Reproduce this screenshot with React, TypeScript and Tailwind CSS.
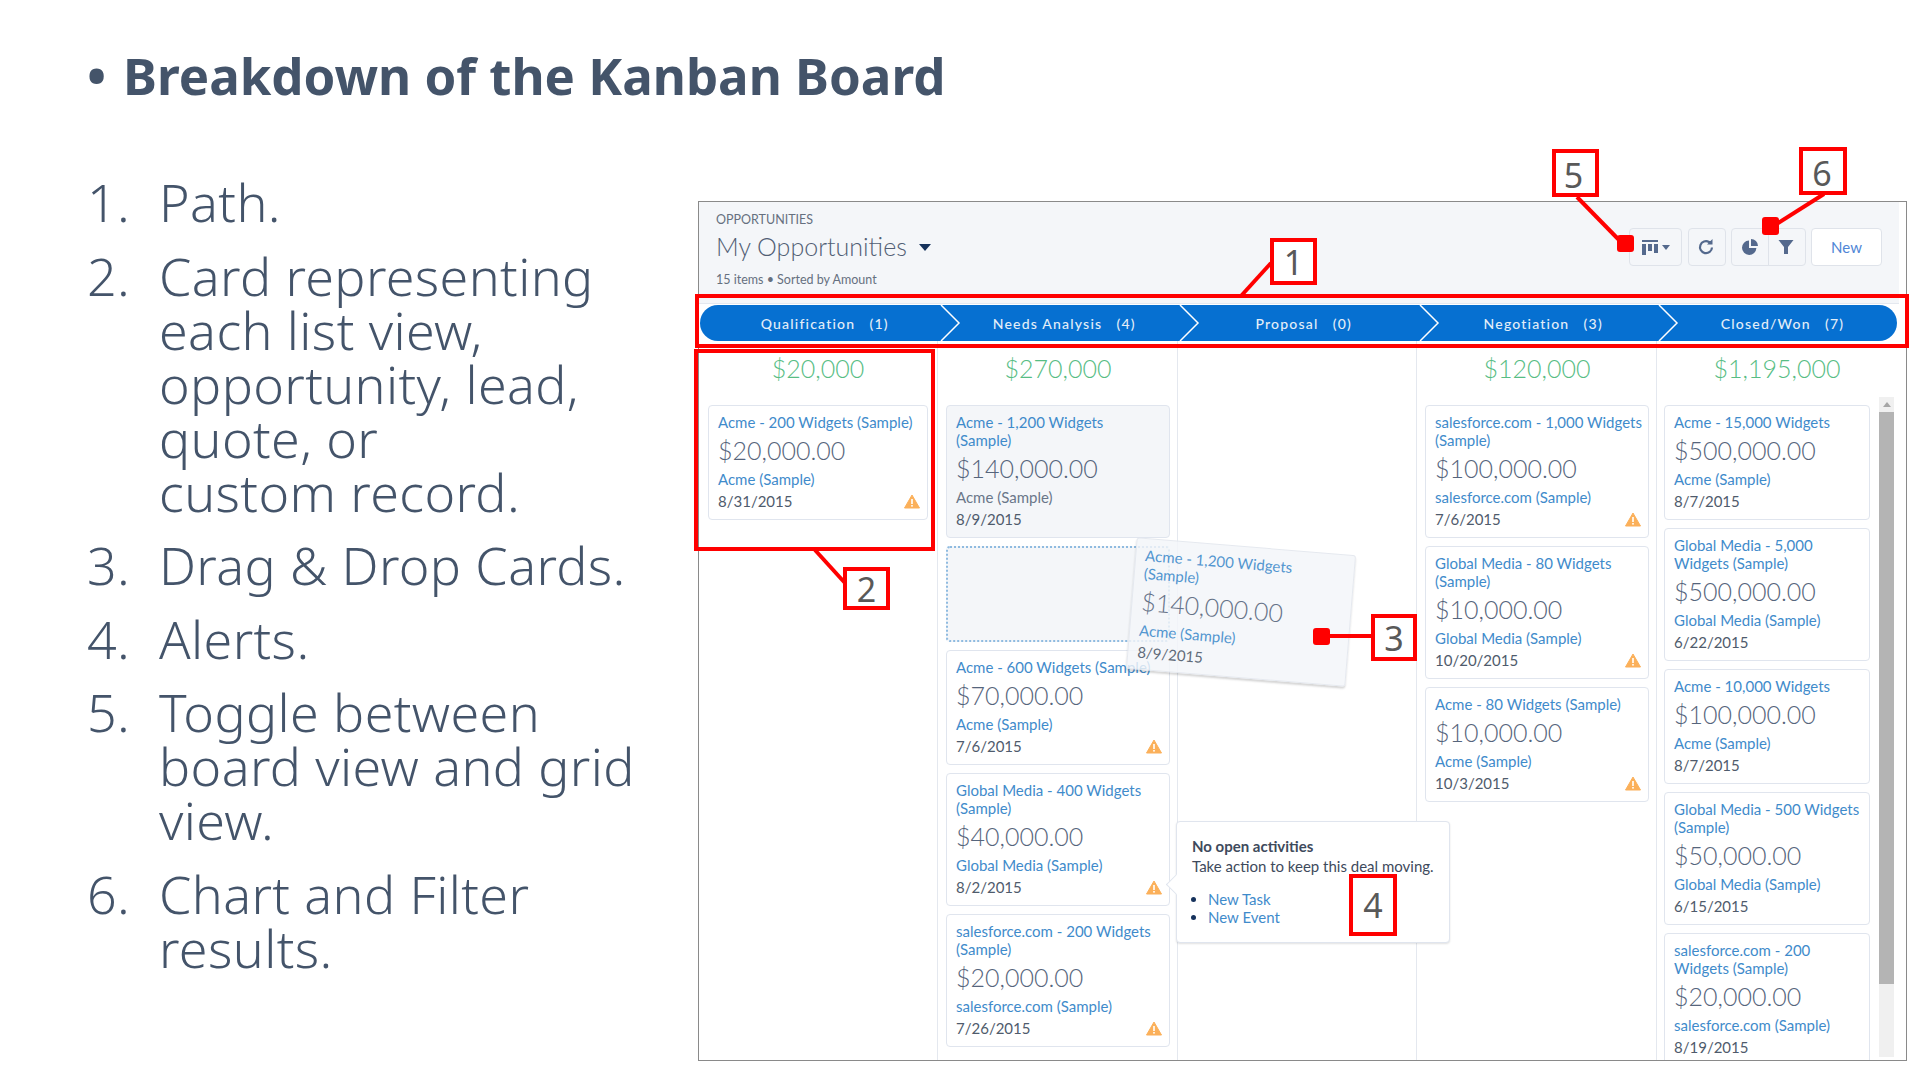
import { ReactNode } from 'react';

type CardData = {
  title: string,
  amount: string,
  account: string,
  date: string,
  warn?: boolean,
  source?: boolean,
}

const columns: { sum: string, cards: CardData[] }[] = [
  {
    sum: '$20,000',
    cards: [{ title: 'Acme - 200 Widgets (Sample)', amount: '$20,000.00', account: 'Acme (Sample)', date: '8/31/2015', warn: true }],
  },
  {
    sum: '$270,000',
    cards: [
      { title: 'Acme - 1,200 Widgets (Sample)', amount: '$140,000.00', account: 'Acme (Sample)', date: '8/9/2015', source: true },
      { title: 'Acme - 600 Widgets (Sample)', amount: '$70,000.00', account: 'Acme (Sample)', date: '7/6/2015', warn: true },
      { title: 'Global Media - 400 Widgets (Sample)', amount: '$40,000.00', account: 'Global Media (Sample)', date: '8/2/2015', warn: true },
      { title: 'salesforce.com - 200 Widgets (Sample)', amount: '$20,000.00', account: 'salesforce.com (Sample)', date: '7/26/2015', warn: true },
    ],
  },
  { sum: '', cards: [] },
  {
    sum: '$120,000',
    cards: [
      { title: 'salesforce.com - 1,000 Widgets (Sample)', amount: '$100,000.00', account: 'salesforce.com (Sample)', date: '7/6/2015', warn: true },
      { title: 'Global Media - 80 Widgets (Sample)', amount: '$10,000.00', account: 'Global Media (Sample)', date: '10/20/2015', warn: true },
      { title: 'Acme - 80 Widgets (Sample)', amount: '$10,000.00', account: 'Acme (Sample)', date: '10/3/2015', warn: true },
    ],
  },
  {
    sum: '$1,195,000',
    cards: [
      { title: 'Acme - 15,000 Widgets', amount: '$500,000.00', account: 'Acme (Sample)', date: '8/7/2015' },
      { title: 'Global Media - 5,000 Widgets (Sample)', amount: '$500,000.00', account: 'Global Media (Sample)', date: '6/22/2015' },
      { title: 'Acme - 10,000 Widgets', amount: '$100,000.00', account: 'Acme (Sample)', date: '8/7/2015' },
      { title: 'Global Media - 500 Widgets (Sample)', amount: '$50,000.00', account: 'Global Media (Sample)', date: '6/15/2015' },
      { title: 'salesforce.com - 200 Widgets (Sample)', amount: '$20,000.00', account: 'salesforce.com (Sample)', date: '8/19/2015' },
    ],
  },
];

const stages = ['Qualification', 'Needs Analysis', 'Proposal', 'Negotiation', 'Closed/Won'];
const counts = [1, 4, 0, 3, 7];

const WarnIcon = () => (
  <svg width="16" height="15" viewBox="0 0 16 15" className="absolute right-[7px] bottom-[10px]">
    <path d="M8 1 L15.5 14 H0.5 Z" fill="#fbb05a" stroke="#fbb05a" strokeLinejoin="round" />
    <rect x="7.2" y="5" width="1.6" height="5" fill="#fff" />
    <rect x="7.2" y="11" width="1.6" height="1.6" fill="#fff" />
  </svg>
);

const CardBody = ({ card }: { card: CardData }) => (
  <>
    <div className="text-[15px] leading-[18px] text-[#3f8bcb]">{card.title}</div>
    <div className="mt-[4px] text-[25px] leading-[30px] font-light text-[#56657c]">{card.amount}</div>
    <div className={`mt-[5px] text-[15px] leading-[18px] ${card.source ? 'text-[#6a7689]' : 'text-[#3f8bcb]'}`}>{card.account}</div>
    <div className="mt-[4px] text-[15px] leading-[18px] text-[#4f5b6c]">{card.date}</div>
  </>
);

const Card = ({ card }: { card: CardData }) => (
  <div className={`relative rounded-[4px] border border-[#e0e5ee] pt-[7px] pb-[9px] pl-[9px] ${card.source ? 'bg-[#f4f6f9] pr-[24px]' : 'bg-white pr-[6px]'}`}>
    <CardBody card={card} />
    {card.warn && <WarnIcon />}
  </div>
);

const Column = ({ sum, cards, index }: { sum: string, cards: CardData[], index: number }) => {
  const widths = ['w-[239px] pl-[9px] pr-[9px]', 'w-[240px] pl-[8px] pr-[7px]', 'w-[239px]', 'w-[240px] pl-[8px] pr-[7px]', 'w-[239px] pl-[7px]'];
  return (
    <div className={`shrink-0 border-r border-[#e4e8ef] last:border-r-0 ${widths[index]}`}>
      <div className={`h-[64px] pt-[10px] text-center text-[25px] leading-[34px] font-light text-[#57bd84] ${index === 4 ? 'pr-[6px]' : ''}`}>{sum}</div>
      <div className="flex">
        <div className={`flex flex-col gap-[8px] ${index === 4 ? 'w-[206px]' : 'w-full'}`}>
          {cards.map((card, i) => (
            <div key={card.title + i} className="contents">
              <Card card={card} />
              {card.source && <div className="h-[96px] shrink-0 rounded-[4px] border-2 border-dotted border-[#8fbbe0] bg-[#f4f6f9]" />}
            </div>
          ))}
        </div>
        {index === 4 && (
          <div className="ml-[9px] flex h-[660px] w-[15px] shrink-0 -translate-y-[8px] flex-col bg-[#f0f0f0]">
            <div className="flex h-[15px] items-center justify-center">
              <div className="h-0 w-0 border-x-[4px] border-b-[5px] border-x-transparent border-b-[#a6a6a6]" />
            </div>
            <div className="h-[572px] bg-[#b4b4b4]" />
          </div>
        )}
      </div>
    </div>
  );
};

const ToolButton = ({ children, className = '' }: { children: ReactNode, className?: string }) => (
  <div className={`flex h-[38px] items-center justify-center rounded-[4px] border border-[#dfe3ea] ${className}`}>
    {children}
  </div>
);

const Tag = ({ n, className }: { n: number, className: string }) => (
  <div className={`absolute flex items-center justify-center border-[4px] border-[#ff0000] bg-white text-[34px] leading-none text-[#595959] ${className}`}>
    {n}
  </div>
);

const App = () => {
  return (
    <div className="relative h-[1080px] w-[1920px] overflow-hidden bg-white font-['Noto_Sans',sans-serif] text-[#44546a]">
      <div className="flex h-[201px] items-start pt-[40px] pl-[87px] text-[51px] leading-[70px] font-bold text-[#44546a]">
        <span className="w-[36px]">•</span>
        <span>Breakdown of the Kanban Board</span>
      </div>

      <div className="flex">
        <ol className="-mt-[26px] flex w-[698px] shrink-0 flex-col gap-[19.5px] pl-[87px] text-[52px] leading-[54px] font-light tracking-[0.4px]">
          <li className="flex"><span className="w-[72px]">1.</span><span>Path.</span></li>
          <li className="flex"><span className="w-[72px]">2.</span><span>Card representing<br />each list view,<br />opportunity, lead,<br />quote, or<br />custom record.</span></li>
          <li className="flex"><span className="w-[72px]">3.</span><span>Drag &amp; Drop Cards.</span></li>
          <li className="flex"><span className="w-[72px]">4.</span><span>Alerts.</span></li>
          <li className="flex"><span className="w-[72px]">5.</span><span>Toggle between<br />board view and grid<br />view.</span></li>
          <li className="flex"><span className="w-[72px]">6.</span><span>Chart and Filter<br />results.</span></li>
        </ol>

        {/* kanban screenshot */}
        <div className="h-[860px] w-[1209px] shrink-0 overflow-hidden border border-[#8a8a8a] bg-white font-['Lato',sans-serif]">
          <div className="mr-[7px] flex h-[102px] justify-between border-b border-[#e4e8ef] bg-[#f4f6f9] pl-[17px] pr-[17px]">
            <div className="pt-[10px] text-[#54698d]">
              <div className="text-[12.5px] leading-[16px] text-[#66707f]">OPPORTUNITIES</div>
              <div className="mt-[1px] flex items-center text-[25px] leading-[34px] font-light text-[#525f75]">
                My Opportunities
                <div className="ml-[12px] mt-[3px] h-0 w-0 border-x-[6px] border-t-[7px] border-x-transparent border-t-[#16325c]" />
              </div>
              <div className="mt-[9px] text-[12.5px] leading-[16px] text-[#66707f]">15 items • Sorted by Amount</div>
            </div>
            <div className="flex gap-[5px] pt-[26px]">
              <ToolButton className="w-[53px] gap-[3px]">
                <svg width="18" height="15" viewBox="0 0 18 15" fill="#54698d">
                  <rect x="1" y="0" width="16" height="2" />
                  <rect x="1" y="4" width="4" height="11" />
                  <rect x="7" y="4" width="4" height="7" />
                  <rect x="13" y="4" width="4" height="9" />
                </svg>
                <div className="h-0 w-0 border-x-[4px] border-t-[5px] border-x-transparent border-t-[#54698d]" />
              </ToolButton>
              <ToolButton className="ml-[1px] w-[38px] pr-[2px]">
                <svg width="18" height="18" viewBox="0 0 18 18" fill="none" stroke="#54698d" strokeWidth="2.2">
                  <path d="M15 9.5 A6 6 0 1 1 12 4 H14" />
                  <path d="M15.5 1 V6.5 H10 Z" fill="#54698d" stroke="none" />
                </svg>
              </ToolButton>
              <div className="flex">
                <ToolButton className="w-[38px] rounded-r-none">
                  <svg width="18" height="18" viewBox="0 0 18 18" fill="#54698d">
                    <path d="M8 2.5 A7.2 7.2 0 1 0 15.4 10 H8 Z" />
                    <path d="M10 1 A7 7 0 0 1 17 8 H10 Z" />
                  </svg>
                </ToolButton>
                <ToolButton className="-ml-[1px] w-[38px] rounded-l-none pr-[2px]">
                  <svg width="16" height="16" viewBox="0 0 16 16" fill="#54698d">
                    <path d="M0.5 1 H15.5 L10 8 V15 H6 V8 Z" />
                  </svg>
                </ToolButton>
              </div>
              <ToolButton className="w-[71px] bg-white text-[15px] text-[#4f86d6]">New</ToolButton>
            </div>
          </div>

          <div className="ml-[1px] mt-[1px] flex h-[36px] w-[1197px] rounded-full bg-[#0670d1]">
            {stages.map((s, i) => (
              <div key={s} className={`relative flex items-center justify-center pl-[10px] text-[14px] font-medium tracking-[1.2px] whitespace-pre text-[#e3eef8] ${i === 4 ? 'w-[239px]' : 'w-[239.5px]'}`}>
                {s}   ({counts[i]})
                {i < 4 && (
                  <svg width="22" height="36" viewBox="0 0 22 36" className="absolute top-0 -right-[22px] z-10" fill="none" stroke="#fff" strokeWidth="1.5">
                    <path d="M1 0 L19 18 L1 36" />
                  </svg>
                )}
              </div>
            ))}
          </div>

          <div className="flex h-[720px]">
            {columns.map((c, i) => (
              <Column key={i} sum={c.sum} cards={c.cards} index={i} />
            ))}
          </div>
        </div>
      </div>

      {/* card being dragged */}
      <div className="absolute top-[546px] left-[1131px] h-[132px] w-[220px] rotate-[4.7deg] rounded-[3px] border border-[#e3e7ee] bg-[#f4f6f9]/90 pt-[7px] pl-[9px] pr-[6px] font-['Lato',sans-serif] opacity-90 shadow-[0_2px_2px_rgba(0,0,0,0.18)]">
        <CardBody card={{ title: 'Acme - 1,200 Widgets (Sample)', amount: '$140,000.00', account: 'Acme (Sample)', date: '8/9/2015' }} />
      </div>

      {/* alert popover */}
      <div className="absolute top-[821px] left-[1176px] h-[122px] w-[274px] rounded-[4px] border border-[#e0e5ee] bg-white pt-[14px] pl-[15px] font-['Lato',sans-serif] text-[15px] leading-[20px] text-[#3e4a5c] shadow-[0_1px_2px_rgba(0,0,0,0.12)]">
        <div className="absolute top-[55px] -left-[8px] h-[15px] w-[15px] rotate-45 border-b border-l border-[#e0e5ee] bg-white" />
        <div className="relative font-bold">No open activities</div>
        <div className="relative">Take action to keep this deal moving.</div>
        <ul className="mt-[14px] list-disc pl-[16px] leading-[18px] text-[#3f8bcb] marker:text-[#16325c]">
          <li>New Task</li>
          <li>New Event</li>
        </ul>
      </div>

      {/* callouts */}
      <svg width="1920" height="1080" className="pointer-events-none absolute top-0 left-0" stroke="#ff0000" strokeWidth="4">
        <line x1="1271" y1="263" x2="1241" y2="296" />
        <line x1="1577" y1="197" x2="1622" y2="243" />
        <line x1="1824" y1="194" x2="1772" y2="227" />
        <line x1="815" y1="550" x2="845" y2="583" />
        <line x1="1322" y1="636" x2="1372" y2="636" />
      </svg>
      <div className="absolute top-[294px] left-[695px] h-[54px] w-[1214px] border-[4px] border-[#ff0000]" />
      <div className="absolute top-[349px] left-[694px] h-[202px] w-[241px] border-[4px] border-[#ff0000]" />
      <div className="absolute top-[235px] left-[1617px] h-[17px] w-[17px] rounded-[3px] bg-[#ff0000]" />
      <div className="absolute top-[217px] left-[1762px] h-[18px] w-[17px] rounded-[3px] bg-[#ff0000]" />
      <div className="absolute top-[628px] left-[1313px] h-[17px] w-[17px] rounded-[3px] bg-[#ff0000]" />
      <Tag n={1} className="top-[238px] left-[1270px] h-[47px] w-[47px]" />
      <Tag n={2} className="top-[567px] left-[843px] h-[43px] w-[47px]" />
      <Tag n={3} className="top-[614px] left-[1371px] h-[47px] w-[46px]" />
      <Tag n={4} className="top-[874px] left-[1349px] h-[62px] w-[48px]" />
      <Tag n={5} className="top-[149px] left-[1552px] h-[48px] w-[47px] pt-[3px] pr-[4px]" />
      <Tag n={6} className="top-[147px] left-[1799px] h-[48px] w-[48px] pt-[3px] pr-[2px]" />
    </div>
  );
};

export default App;
